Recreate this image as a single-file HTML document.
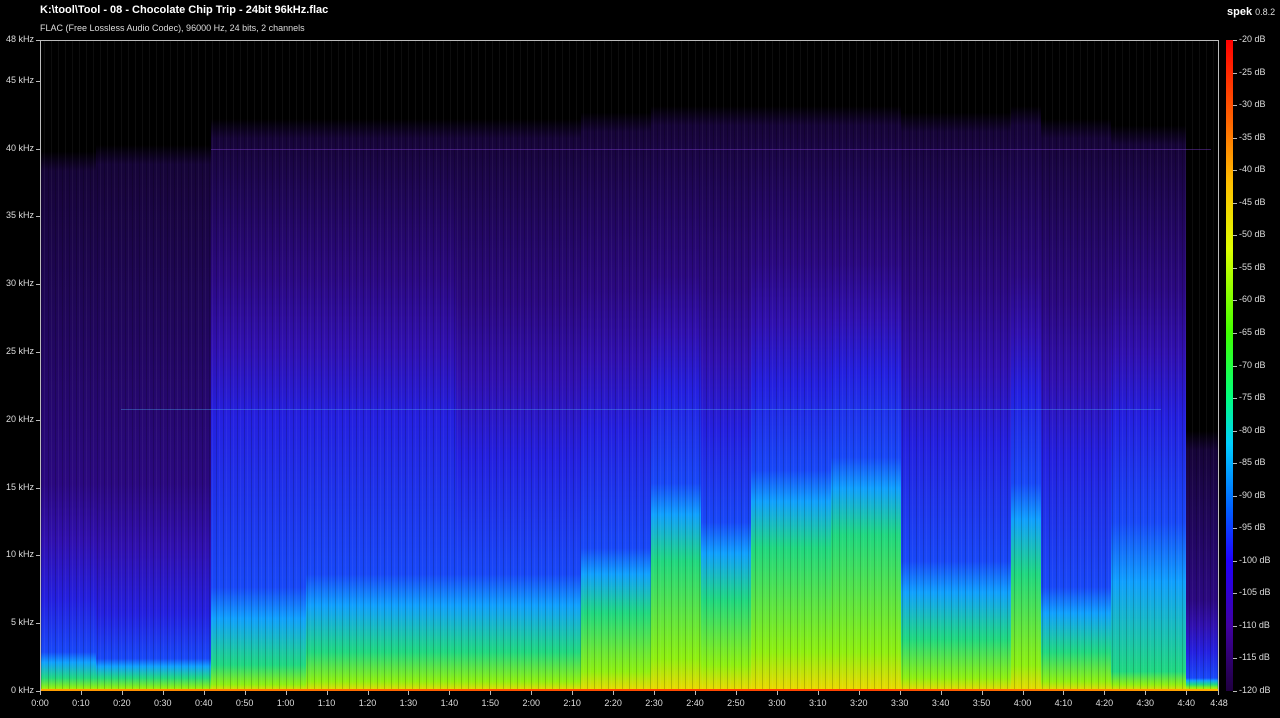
<!DOCTYPE html>
<html><head><meta charset="utf-8"><style>
body{margin:0;width:1280px;height:718px;background:#000;overflow:hidden;font-family:"Liberation Sans",sans-serif;color:#fff;position:relative}
.t{position:absolute;white-space:nowrap}
#plot{position:absolute;left:40px;top:40px;width:1179px;height:651px;border-top:1px solid #bbb;border-left:1px solid #bbb;border-right:1px solid #bbb;box-sizing:border-box;overflow:hidden}
.c{position:absolute;top:0;height:100%}
.yl{position:absolute;font-size:9px;color:#ddd;text-align:right}
.xl{position:absolute;top:698px;font-size:9px;color:#ddd;transform:translateX(-50%)}
.dl{position:absolute;left:1239px;font-size:9px;color:#ddd}
.tk{position:absolute;background:#bbb}
</style></head><body>
<div class="t" style="left:40px;top:4px;font-size:11px;font-weight:bold">K:\tool\Tool - 08 - Chocolate Chip Trip - 24bit 96kHz.flac</div>
<div class="t" style="left:40px;top:23px;font-size:9px;color:#ddd">FLAC (Free Lossless Audio Codec), 96000 Hz, 24 bits, 2 channels</div>
<div class="t" style="left:1227px;top:6px;font-size:11px;font-weight:bold">spek <span style="font-weight:normal;font-size:9px;color:#ddd">0.8.2</span></div>
<div id="plot">
<div id="cols"></div>
<div class="c" style="left:0;width:100%;background:repeating-linear-gradient(90deg,rgba(0,0,0,.18) 0 1px,transparent 1px 3px,rgba(255,255,255,.05) 3px 4px,transparent 4px 7px)"></div>
<div class="c" style="left:0;width:100%;top:auto;bottom:0;height:2px;background:linear-gradient(90deg,#ffa000,#ff5000 40%,#ff4000 70%,#ffb000)"></div>
<div class="c" style="left:80px;width:1040px;top:368px;height:1px;background:rgba(80,180,255,.35)"></div>
<div class="c" style="left:170px;width:1000px;top:108px;height:1px;background:rgba(120,60,200,.45)"></div>
</div>
<div style="position:absolute;left:1226px;top:40px;width:7px;height:651px;background:linear-gradient(#ff0000 0%,#ff6000 12%,#ffc000 22%,#e0ff00 32%,#40ff00 45%,#00ff80 55%,#00d0ff 62%,#0060ff 72%,#2000ff 80%,#4000a0 90%,#200040 100%)"></div>
<div id="labels"></div>
<script>
var cols=[[0,55,.5,2,6,14,32,83],[55,170,.5,2,5,12,32,84],[170,265,1,4,16,42,64,88],[265,415,1.5,6,18,42,64,88],[415,540,1.5,6,18,36,60,88],[540,610,3,12,22,40,62,89],[610,660,5,20,32,46,64,90],[660,710,4,14,26,40,62,90],[710,790,6,22,34,47,66,90],[790,860,6,24,36,49,66,90],[860,970,2,8,20,38,62,89],[970,1000,4,18,32,46,64,90],[1000,1070,1.5,6,16,36,60,88],[1070,1145,1,3,26,42,62,87],[1145,1179,.5,1,2,6,14,40]];
var h='';cols.forEach(function(a){var Y=a[2],G=a[3],C=a[4],B=a[5],P=a[6],T=a[7];
h+='<div class="c" style="left:'+a[0]+'px;width:'+(a[1]-a[0])+'px;background:linear-gradient(to top,#f0d800 0%,#90f010 '+Y+'%,#20d880 '+G+'%,#10a0ff '+(G*0.4+C*0.6)+'%,#1848f8 '+C+'%,#2420e0 '+B+'%,#3010b0 '+((B+P)/2)+'%,#2a0880 '+P+'%,#160438 '+(T-3)+'%,#000 '+T+'%)"></div>';});
document.getElementById('cols').innerHTML=h;
var L='';
var ks=[0,5,10,15,20,25,30,35,40,45,48];
ks.forEach(function(k){var y=691-k*651/48;L+='<div class="yl" style="top:'+(y-6)+'px;width:34px;left:0">'+k+' kHz</div><div class="tk" style="left:36px;top:'+y+'px;width:4px;height:1px"></div>';});
for(var s=0;s<=280;s+=10){var x=40+s*1179/288;var m=Math.floor(s/60),sec=s%60;L+='<div class="xl" style="left:'+x+'px">'+m+':'+(sec<10?'0':'')+sec+'</div><div class="tk" style="left:'+x+'px;top:691px;width:1px;height:4px"></div>';}
L+='<div class="xl" style="left:1219px">4:48</div><div class="tk" style="left:1218px;top:691px;width:1px;height:4px"></div>';
for(var i=0;i<=20;i++){var y=40+i*651/20;L+='<div class="dl" style="top:'+(y-6)+'px">-'+(20+i*5)+' dB</div><div class="tk" style="left:1233px;top:'+y+'px;width:4px;height:1px"></div>';}
document.getElementById('labels').innerHTML=L;
</script>
</body></html>
